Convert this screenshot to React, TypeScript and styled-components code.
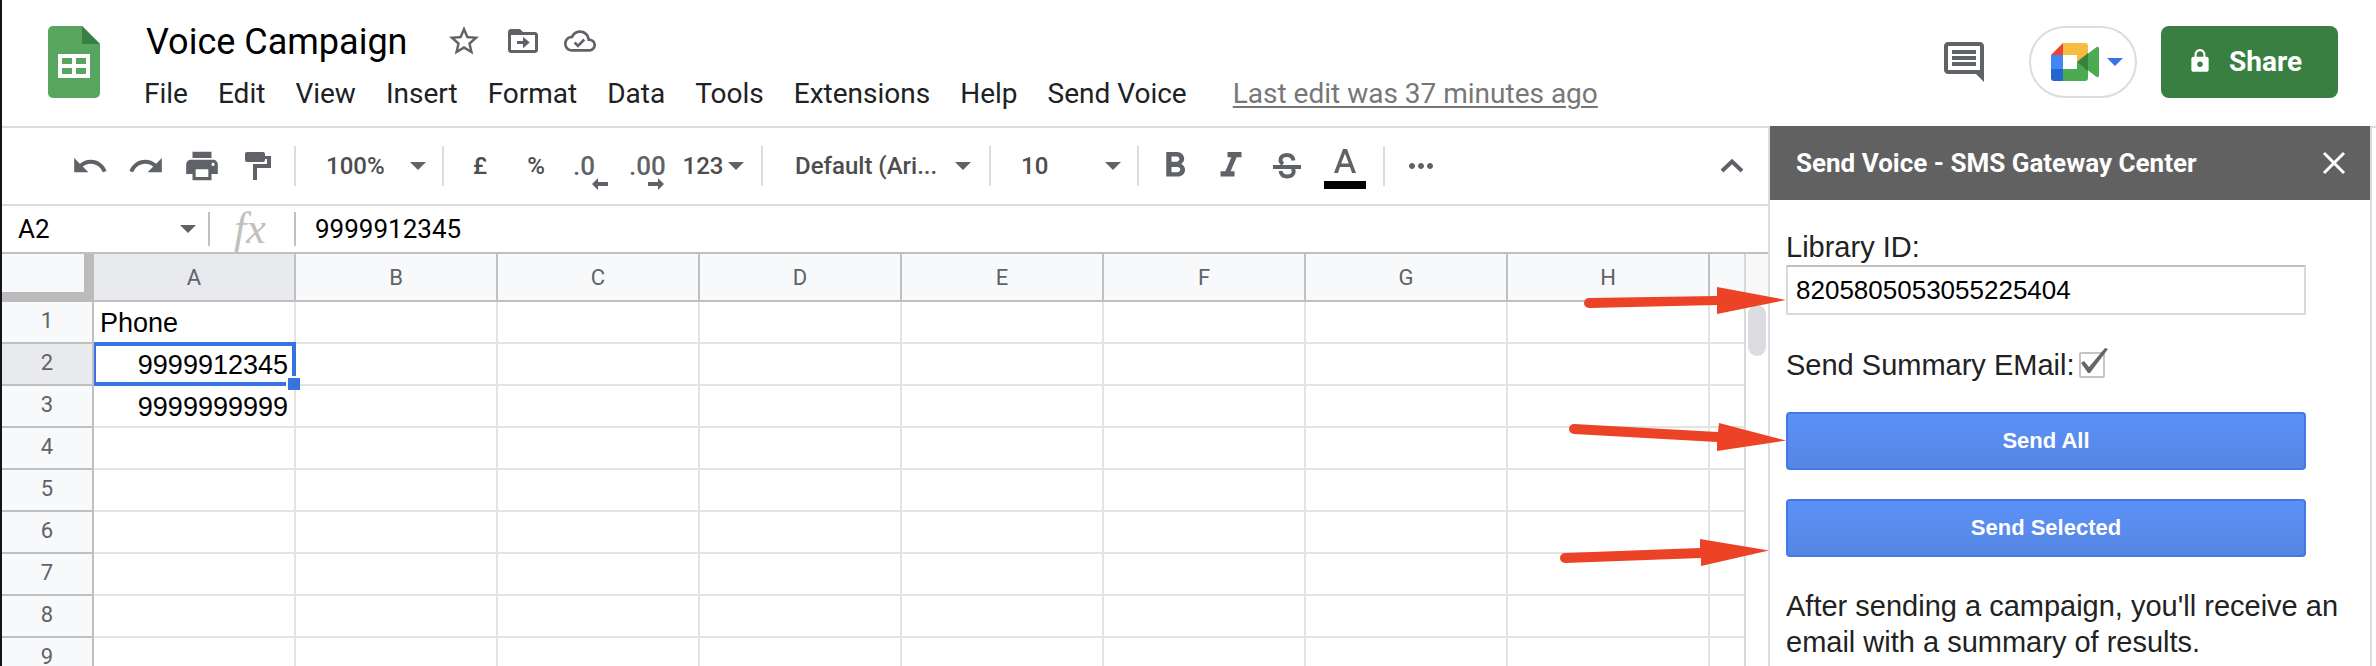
import React from "react";
import styled, { createGlobalStyle } from "styled-components";

const roboto = `Roboto, "Liberation Sans", sans-serif`;
const arial = `"Liberation Sans", Arial, sans-serif`;
const ink = "#5f6368";
const line = "#dadce0";
const rule = "#c0c0c0";
const blue = "#3773e0";

const GlobalStyle = createGlobalStyle`
  *, *::before, *::after { box-sizing: border-box; }
  body { margin: 0; background: #fff; font-family: ${roboto}; }
  button, input, select { font: inherit; color: inherit; margin: 0; padding: 0; border: 0; background: none; outline: 0; }
  button { cursor: pointer; }
  svg { display: block; flex: none; }
`;

const Shell = styled.div`
  display: flex;
  flex-direction: column;
  height: 100vh;
  overflow: hidden;
  border-left: 2px solid #10151d;
`;

/* ---------- header ---------- */

const Header = styled.header`
  display: flex;
  align-items: flex-start;
  flex: none;
  height: 126px;
  padding: 0 38px 0 46px;
`;

const LogoLink = styled.a`
  margin: 26px 44px 0 0;
`;

const DocInfo = styled.div`
  flex: 1;
  min-width: 0;
  padding-top: 16px;
`;

const TitleRow = styled.div`
  display: flex;
  align-items: center;
  height: 50px;
  padding-left: 2px;
`;

const DocTitle = styled.h1`
  margin: 0 38px 0 0;
  padding-top: 2px;
  font-size: 36px;
  line-height: 48px;
  font-weight: 400;
  color: #000;
`;

const TitleActions = styled.div`
  display: flex;
  align-items: center;
  gap: 23px;
`;

const PlainButton = styled.button`
  display: flex;
  align-items: center;
  justify-content: center;
  color: ${ink};
`;

const MenuBar = styled.nav`
  display: flex;
  align-items: center;
  gap: 30px;
  padding-top: 12px;
  font-size: 28px;
  line-height: 32px;
  color: #202124;
  white-space: nowrap;
`;

const LastEdit = styled.a`
  margin-left: 16px;
  color: #777;
  text-decoration: underline;
  text-decoration-thickness: 2px;
  text-underline-offset: 3px;
`;

const HeaderActions = styled.div`
  display: flex;
  align-items: center;
  height: 72px;
  margin-top: 26px;
`;

const MeetButton = styled(PlainButton)`
  gap: 8px;
  width: 108px;
  height: 72px;
  margin: 0 24px 0 41px;
  padding-left: 8px;
  border: 2px solid ${line};
  border-radius: 36px;
`;

const ShareButton = styled.button`
  display: flex;
  align-items: center;
  justify-content: center;
  gap: 16px;
  width: 177px;
  height: 72px;
  padding: 0 10px 2px 0;
  border-radius: 8px;
  background: #3a7f42;
  color: #fff;
  font-size: 28px;
  font-weight: 700;
`;

/* ---------- body ---------- */

const Body = styled.div`
  display: grid;
  grid-template-columns: minmax(0, 1fr) 600px 6px;
  flex: 1;
  min-height: 0;
`;

const Main = styled.main`
  display: flex;
  flex-direction: column;
  min-height: 0;
  border-top: 2px solid ${line};
  border-right: 2px solid ${line};
`;

const Gutter = styled.div`
  border-top: 2px solid ${line};
  border-left: 2px solid ${line};
`;

const Toolbar = styled.div`
  display: flex;
  align-items: center;
  flex: none;
  height: 78px;
  padding: 0 8px 0 60px;
  border-bottom: 2px solid ${line};
  font-size: 24px;
  font-weight: 500;
  color: #4d4d4d;
`;

const Tool = styled(PlainButton)<{ $w?: number; $text?: boolean }>`
  flex: none;
  width: ${(p) => p.$w ?? 56}px;
  height: 56px;
  color: ${(p) => (p.$text ? "#4d4d4d" : ink)};
`;

const DecimalTool = styled(Tool)`
  flex-direction: column;
  align-items: flex-start;
  justify-content: flex-start;
  padding: 14px 12px 0 9px;
  font-size: 26px;
  line-height: 28px;

  svg {
    align-self: flex-end;
    margin-top: -2px;
  }
`;

const NumberTool = styled(Tool)`
  gap: 5px;
  padding-right: 2px;
`;

const ColorTool = styled(Tool)`
  flex-direction: column;
  gap: 8px;
  padding-top: 6px;
`;

const Separator = styled.div`
  flex: none;
  width: 2px;
  height: 40px;
  margin: 0 8px;
  background: ${line};
`;

const Spacer = styled.div`
  flex: 1;
`;

const SelectBox = styled.div<{ $w: number; $wide?: boolean }>`
  display: flex;
  align-items: center;
  flex: none;
  width: ${(p) => p.$w}px;
  padding: ${(p) => (p.$wide ? "0 10px 0 24px" : "0 8px 0 22px")};
`;

const Select = styled.select`
  flex: 1;
  min-width: 0;
  height: 40px;
  appearance: none;
`;

const FormulaBar = styled.div`
  display: flex;
  align-items: center;
  flex: none;
  height: 48px;
  border-bottom: 2px solid ${rule};
  font-size: 26px;
  color: #000;
`;

const NameBox = styled.div`
  display: flex;
  align-items: center;
  width: 206px;
  padding: 0 12px 0 16px;
`;

const BareInput = styled.input`
  flex: 1;
  min-width: 0;
  height: 40px;
`;

const FormulaInput = styled(BareInput)`
  padding: 0 0 0 19px;
`;

const BarRule = styled.div`
  width: 2px;
  height: 34px;
  background: ${rule};
`;

const FxMark = styled.span`
  width: 84px;
  padding-right: 4px;
  text-align: center;
  font: italic 44px/40px "Liberation Serif", serif;
  color: ${rule};
`;

/* ---------- sheet ---------- */

const SheetArea = styled.div`
  display: flex;
  flex: 1;
  min-height: 0;
  overflow: hidden;
`;

const TableClip = styled.div`
  flex: 1;
  min-width: 0;
`;

const SheetTable = styled.table`
  width: 100%;
  table-layout: fixed;
  border-collapse: separate;
  border-spacing: 0;
`;

const LabelCol = styled.col`
  width: 92px;
`;

const DataCol = styled.col`
  width: 202px;
`;

const Corner = styled.td`
  padding: 0;
  background: #f8f9fb;
  border: solid #bbb;
  border-width: 0 10px 10px 0;
`;

const ColHead = styled.th<{ $active?: boolean }>`
  height: 48px;
  padding: 0;
  background: ${(p) => (p.$active ? "#e8eaed" : "#f8f9fb")};
  border: solid ${rule};
  border-width: 0 2px 2px 0;
  color: ${ink};
  font-size: 22px;
  font-weight: 400;

  &:last-child { border-right: 0; }
`;

const RowHead = styled(ColHead)`
  height: 42px;
  padding-bottom: 2px;
  line-height: 16px;
`;

const Cell = styled.td<{ $numeric?: boolean }>`
  position: relative;
  height: 42px;
  padding: 6px 6px 4px;
  border: solid #e2e3e3;
  border-width: 0 2px 2px 0;
  color: #000;
  font: 27px/30px ${arial};
  text-align: ${(p) => (p.$numeric ? "right" : "left")};

  &:last-child { border-right: 0; }
`;

const Selection = styled.div`
  position: absolute;
  inset: -2px -2px -2px 0;
  z-index: 1;
  border: 4px solid ${blue};
  border-left-width: 2px;

  &::after {
    content: "";
    position: absolute;
    right: -8px;
    bottom: -8px;
    width: 14px;
    height: 14px;
    border: solid #fff;
    border-width: 2px 0 0 2px;
    background: ${blue};
  }
`;

const ScrollTrack = styled.div`
  width: 24px;
  border-left: 2px solid #d9d9d9;
`;

const ScrollCap = styled.div`
  height: 48px;
  background: #f8f8f8;
`;

const ScrollThumb = styled.div`
  height: 51px;
  margin: 3px 2px;
  border-radius: 9px;
  background: ${line};
`;

/* ---------- side panel ---------- */

const Panel = styled.aside`
  position: relative;
  min-width: 0;
  font-family: ${arial};
  color: #222;
`;

const PanelHeader = styled.div`
  display: flex;
  align-items: center;
  justify-content: space-between;
  height: 74px;
  padding: 0 24px 0 26px;
  background: #616161;
  color: #fff;
`;

const PanelTitle = styled.h2`
  margin: 0;
  font: 700 26px/32px ${roboto};
`;

const PanelForm = styled.form`
  display: flex;
  flex-direction: column;
  padding: 29px 16px 0;
  font-size: 29px;
  line-height: 36px;
`;

const LibraryInput = styled.input`
  width: 520px;
  height: 50px;
  padding: 0 8px;
  border: 2px solid #d9d9d9;
  border-top-color: ${rule};
  font-size: 26px;
  color: #000;
`;

const CheckRow = styled.div`
  display: flex;
  align-items: center;
  margin: 32px 0 29px;
`;

const CheckWrap = styled.span`
  position: relative;
  display: flex;
  width: 26px;
  height: 26px;
  margin-left: 4px;

  svg {
    position: absolute;
    left: 2px;
    bottom: 4px;
    pointer-events: none;
  }
`;

const CheckBox = styled.input`
  appearance: none;
  width: 26px;
  height: 26px;
  border: 2px solid #c6c6c6;
  border-radius: 2px;
`;

const ActionButton = styled.button`
  width: 520px;
  height: 58px;
  margin-bottom: 29px;
  border: 2px solid #4379e4;
  border-radius: 4px;
  background: linear-gradient(#5b91f7, #5686e4);
  color: #fff;
  font-size: 22px;
  font-weight: 700;
`;

const Note = styled.p`
  margin: 2px 0 0;
`;

const Pointer = styled.svg<{ $top: number; $left: number }>`
  position: absolute;
  top: ${(p) => p.$top}px;
  left: ${(p) => p.$left}px;
  z-index: 2;
  pointer-events: none;
`;

/* ---------- drawings ---------- */

const Glyph = ({ size = 36, d }: { size?: number; d: string }) => (
  <svg width={size} height={size} viewBox="0 0 24 24" fill="currentColor" aria-hidden="true">
    <path fillRule="evenodd" d={d} />
  </svg>
);

const Caret = ({ color = ink }: { color?: string }) => (
  <svg width="16" height="8" viewBox="0 0 16 8" aria-hidden="true">
    <path d="M0 0h16L8 8z" fill={color} />
  </svg>
);

const SheetsLogo = () => (
  <svg width="52" height="72" viewBox="0 0 52 72" aria-hidden="true">
    <path d="M5 0h29l18 18v49a5 5 0 0 1-5 5H5a5 5 0 0 1-5-5V5a5 5 0 0 1 5-5z" fill="#57a55e" />
    <path d="M34 0l18 18H34z" fill="#3a7f42" />
    <path fillRule="evenodd" fill="#fff" d="M10 28h32v24H10zM14 32v6h10v-6zM28 32v6h10v-6zM14 42v6h10v-6zM28 42v6h10v-6z" />
  </svg>
);

const MeetLogo = () => (
  <svg width="48" height="38" viewBox="0 0 48 38" aria-hidden="true">
    <path d="M12 0v12H0z" fill="#ea4335" />
    <path d="M0 12h12v14H0z" fill="#4285f4" />
    <path d="M0 26h12v12H3a3 3 0 0 1-3-3z" fill="#2664d1" />
    <path d="M12 0h22a3 3 0 0 1 3 3v9l-11 7v-7H12z" fill="#f6bb42" />
    <path d="M12 26h14v-7l11 8v8a3 3 0 0 1-3 3H12z" fill="#4caa50" />
    <path d="M26 19L45 4.500c1-1 3-1 3 1v27c0 2-2 2-3 1z" fill="#4caa50" />
    <path d="M26 19l11-9v18z" fill="#38823c" />
  </svg>
);

const icons = {
  star: "M22 9.24l-7.190-.620L12 2 9.190 8.630 2 9.240l5.460 4.730L5.820 21 12 17.270 18.180 21l-1.630-7.030L22 9.240zM12 15.400l-3.760 2.270 1-4.280-3.320-2.880 4.380-.380L12 6.100l1.710 4.040 4.380.380-3.320 2.880 1 4.280L12 15.400z",
  move: "M20 6h-8l-2-2H4c-1.100 0-2 .9-2 2v12c0 1.100.9 2 2 2h16c1.100 0 2-.9 2-2V8c0-1.100-.9-2-2-2zm0 12H4V8h16v10zM12 9.200l4.500 3.800-4.500 3.800V14H8v-2h4z",
  cloud: "M19.350 10.040C18.670 6.590 15.640 4 12 4 9.110 4 6.600 5.640 5.350 8.040 2.340 8.360 0 10.910 0 14c0 3.310 2.690 6 6 6h13c2.760 0 5-2.240 5-5 0-2.640-2.050-4.780-4.650-4.960zM19 18H6c-2.210 0-4-1.790-4-4 0-2.050 1.530-3.760 3.560-3.970l1.070-.110.5-.950C8.080 7.140 9.940 6 12 6c2.620 0 4.880 1.860 5.390 4.430l.3 1.500 1.530.110c1.560.1 2.780 1.410 2.780 2.960 0 1.650-1.350 3-3 3zM10.500 17l-3.200-3.200 1.400-1.400 1.800 1.800 4-4 1.400 1.400z",
  comment: "M20 2H4c-1.100 0-2 .9-2 2v12c0 1.100.9 2 2 2h14l4 4V4c0-1.100-.9-2-2-2zM4 4h16v12H4zM6 6h12v2H6zM6 9h12v2H6zM6 12h12v2H6z",
  lock: "M18 8h-1V6c0-2.760-2.240-5-5-5S7 3.240 7 6v2H6c-1.100 0-2 .9-2 2v10c0 1.100.9 2 2 2h12c1.100 0 2-.9 2-2V10c0-1.100-.9-2-2-2zm-6 9.500a2.500 2.500 0 1 1 0-5 2.500 2.500 0 0 1 0 5zM15.100 8H8.900V6c0-1.710 1.390-3.100 3.100-3.100s3.100 1.390 3.100 3.100v2z",
  undo: "M12.500 8c-2.650 0-5.050.990-6.900 2.600L2 7v9h9l-3.620-3.620c1.390-1.160 3.160-1.880 5.120-1.880 3.540 0 6.550 2.310 7.600 5.500l2.370-.780C21.080 11.030 17.150 8 12.500 8z",
  redo: "M18.400 10.600C16.550 8.990 14.150 8 11.500 8c-4.650 0-8.580 3.030-9.960 7.220L3.900 16c1.050-3.190 4.050-5.500 7.600-5.500 1.950 0 3.730.720 5.120 1.880L13 16h9V7l-3.600 3.600z",
  print: "M19 8H5c-1.660 0-3 1.340-3 3v6h4v4h12v-4h4v-6c0-1.660-1.340-3-3-3zm-3 11H8v-5h8v5zm3-7c-.550 0-1-.450-1-1s.450-1 1-1 1 .450 1 1-.450 1-1 1zM18 3H6v4h12V3z",
  bold: "M15.600 10.790c.970-.670 1.650-1.770 1.650-2.790 0-2.260-1.750-4-4-4H7v14h7.040c2.090 0 3.710-1.700 3.710-3.790 0-1.520-.860-2.820-2.150-3.420zM10 6.500h3c.830 0 1.500.670 1.500 1.500s-.670 1.500-1.500 1.500h-3v-3zm3.500 9H10v-3h3.500c.830 0 1.500.670 1.500 1.500s-.670 1.500-1.500 1.500z",
  italic: "M10 4v3h2.210l-3.420 8H6v3h8v-3h-2.210l3.420-8H18V4z",
  more: "M6 10c-1.100 0-2 .9-2 2s.9 2 2 2 2-.9 2-2-.9-2-2-2zm12 0c-1.100 0-2 .9-2 2s.9 2 2 2 2-.9 2-2-.9-2-2-2zm-6 0c-1.100 0-2 .9-2 2s.9 2 2 2 2-.9 2-2-.9-2-2-2z",
};

const PaintIcon = () => (
  <svg width="26" height="28" viewBox="0 0 26 28" fill={ink} aria-hidden="true">
    <path d="M2 0h16a2 2 0 0 1 2 2v2h6v12H12v12H8V12h14V7h-2v1a2 2 0 0 1-2 2H2a2 2 0 0 1-2-2V2a2 2 0 0 1 2-2z" />
  </svg>
);

const StrikeIcon = () => (
  <svg width="28" height="26" viewBox="0 0 28 26" aria-hidden="true">
    <path d="M20.500 7.500C20 4 17.500 2 14 2 10 2 7.500 4 7.500 7c0 2 1 3 2.500 4M7.500 18c.5 3.500 3 5.500 6.700 5.500 4 0 6.500-2 6.500-5 0-1.200-.3-2-1-3" fill="none" stroke={ink} strokeWidth="4" />
    <path d="M0 12h28v4H0z" fill={ink} />
  </svg>
);

const FontColorIcon = () => (
  <svg width="22" height="24" viewBox="0 0 22 24" fill={ink} aria-hidden="true">
    <path fillRule="evenodd" d="M9 0h4l9 24h-4l-2-6H6l-2 6H0zM11 4.500L7.200 14.500h7.600z" />
  </svg>
);

const ColorSwatch = styled.span`
  width: 42px;
  height: 8px;
  background: #000;
`;

const SmallArrow = ({ back }: { back?: boolean }) => (
  <svg width="16" height="12" viewBox="0 0 16 12" fill={ink} aria-hidden="true">
    <path d={back ? "M0 6l6-6v4h10v4H6v4z" : "M16 6l-6-6v4H0v4h10v4z"} />
  </svg>
);

const ChevronUp = () => (
  <svg width="24" height="14" viewBox="0 0 24 14" aria-hidden="true">
    <path d="M2 12L12 2.500 22 12" fill="none" stroke={ink} strokeWidth="4" />
  </svg>
);

const CloseIcon = () => (
  <svg width="24" height="24" viewBox="0 0 24 24" aria-hidden="true">
    <path d="M2 2l20 20M22 2L2 22" fill="none" stroke="#fff" strokeWidth="3" />
  </svg>
);

const CheckMark = () => (
  <svg width="28" height="26" viewBox="0 0 28 26" aria-hidden="true">
    <path d="M0 15l3-2 5 6L24 0l3 1L9 25H7z" fill="#666" />
  </svg>
);

const menus = ["File", "Edit", "View", "Insert", "Format", "Data", "Tools", "Extensions", "Help", "Send Voice"];
const columns = ["A", "B", "C", "D", "E", "F", "G", "H"];
const rows = [1, 2, 3, 4, 5, 6, 7, 8, 9];
const phoneColumn: Record<number, string> = { 1: "Phone", 2: "9999912345", 3: "9999999999" };

const pointers = [
  { top: 161, left: -186, d: "M5 11L133 9V0l69 13-69 14v-9L5 21a5 5 0 0 1 0-10z" },
  { top: 297, left: -201, d: "M5 1L149 9l1-9 67 17.500L148 28v-9L5 11A5 5 0 0 1 5 1z" },
  { top: 413, left: -210, d: "M5 14L140 9V0l69 11.500L141 27v-8L5 24a5 5 0 0 1 0-10z" },
];

export default function App() {
  return (
    <Shell>
      <GlobalStyle />
      <Header>
        <LogoLink href="#home" aria-label="Sheets home"><SheetsLogo /></LogoLink>
        <DocInfo>
          <TitleRow>
            <DocTitle>Voice Campaign</DocTitle>
            <TitleActions>
              <PlainButton aria-label="Star"><Glyph d={icons.star} /></PlainButton>
              <PlainButton aria-label="Move"><Glyph d={icons.move} /></PlainButton>
              <PlainButton aria-label="See document status"><Glyph size={32} d={icons.cloud} /></PlainButton>
            </TitleActions>
          </TitleRow>
          <MenuBar>
            {menus.map((m) => <button key={m}>{m}</button>)}
            <LastEdit href="#history">Last edit was 37 minutes ago</LastEdit>
          </MenuBar>
        </DocInfo>
        <HeaderActions>
          <PlainButton aria-label="Open comment history"><Glyph size={48} d={icons.comment} /></PlainButton>
          <MeetButton aria-label="Join a call"><MeetLogo /><Caret color="#3473e0" /></MeetButton>
          <ShareButton><Glyph size={26} d={icons.lock} />Share</ShareButton>
        </HeaderActions>
      </Header>

      <Body>
        <Main>
          <Toolbar>
            <Tool aria-label="Undo"><Glyph d={icons.undo} size={38} /></Tool>
            <Tool aria-label="Redo"><Glyph d={icons.redo} size={38} /></Tool>
            <Tool aria-label="Print"><Glyph d={icons.print} size={38} /></Tool>
            <Tool aria-label="Paint format"><PaintIcon /></Tool>
            <Separator />
            <SelectBox $w={130}>
              <Select aria-label="Zoom"><option>100%</option></Select>
              <Caret />
            </SelectBox>
            <Separator />
            <Tool $text>£</Tool>
            <Tool $text>%</Tool>
            <DecimalTool>.0<SmallArrow back /></DecimalTool>
            <DecimalTool>.00<SmallArrow /></DecimalTool>
            <NumberTool $text $w={77}>123<Caret /></NumberTool>
            <Separator />
            <SelectBox $w={210} $wide>
              <Select aria-label="Font"><option>Default (Ari...</option></Select>
              <Caret />
            </SelectBox>
            <Separator />
            <SelectBox $w={130}>
              <Select aria-label="Font size"><option>10</option></Select>
              <Caret />
            </SelectBox>
            <Separator />
            <Tool aria-label="Bold"><Glyph d={icons.bold} size={42} /></Tool>
            <Tool aria-label="Italic"><Glyph d={icons.italic} size={42} /></Tool>
            <Tool aria-label="Strikethrough"><StrikeIcon /></Tool>
            <ColorTool aria-label="Text color" $w={60}><FontColorIcon /><ColorSwatch /></ColorTool>
            <Separator />
            <Tool aria-label="More"><Glyph d={icons.more} /></Tool>
            <Spacer />
            <Tool aria-label="Hide the menus"><ChevronUp /></Tool>
          </Toolbar>

          <FormulaBar>
            <NameBox>
              <BareInput aria-label="Name box" defaultValue="A2" />
              <Caret />
            </NameBox>
            <BarRule />
            <FxMark>fx</FxMark>
            <BarRule />
            <FormulaInput aria-label="Formula" defaultValue="9999912345" />
          </FormulaBar>

          <SheetArea>
            <TableClip>
              <SheetTable>
                <colgroup>
                  <LabelCol />
                  {columns.map((c) => <DataCol key={c} />)}
                  <col />
                </colgroup>
                <thead>
                  <tr>
                    <Corner />
                    {columns.map((c) => <ColHead key={c} scope="col" $active={c === "A"}>{c}</ColHead>)}
                    <ColHead as="td" />
                  </tr>
                </thead>
                <tbody>
                  {rows.map((r) => (
                    <tr key={r}>
                      <RowHead scope="row" $active={r === 2}>{r}</RowHead>
                      <Cell $numeric={r > 1}>
                        {phoneColumn[r]}
                        {r === 2 && <Selection />}
                      </Cell>
                      {columns.map((c) => <Cell key={c} />)}
                    </tr>
                  ))}
                </tbody>
              </SheetTable>
            </TableClip>
            <ScrollTrack>
              <ScrollCap />
              <ScrollThumb />
            </ScrollTrack>
          </SheetArea>
        </Main>

        <Panel>
          <PanelHeader>
            <PanelTitle>Send Voice - SMS Gateway Center</PanelTitle>
            <PlainButton aria-label="Close"><CloseIcon /></PlainButton>
          </PanelHeader>
          <PanelForm onSubmit={(e) => e.preventDefault()}>
            <label htmlFor="library">Library ID:</label>
            <LibraryInput id="library" defaultValue="8205805053055225404" />
            <CheckRow>
              <label htmlFor="summary">Send Summary EMail:</label>
              <CheckWrap>
                <CheckBox id="summary" type="checkbox" defaultChecked />
                <CheckMark />
              </CheckWrap>
            </CheckRow>
            <ActionButton type="button">Send All</ActionButton>
            <ActionButton type="button">Send Selected</ActionButton>
            <Note>After sending a campaign, you'll receive an email with a summary of results.</Note>
          </PanelForm>
          {pointers.map((p) => (
            <Pointer key={p.top} $top={p.top} $left={p.left} width="220" height="30" viewBox="0 0 220 30" aria-hidden="true">
              <path d={p.d} fill="#ec4326" />
            </Pointer>
          ))}
        </Panel>
        <Gutter />
      </Body>
    </Shell>
  );
}
